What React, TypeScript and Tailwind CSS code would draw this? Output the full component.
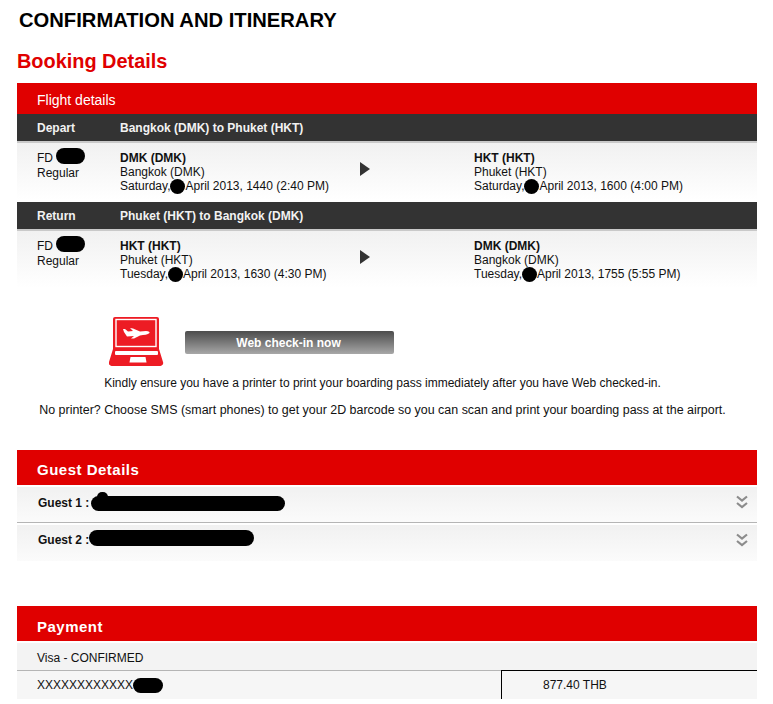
const font = "font-['Liberation_Sans',Arial,sans-serif]";

function Blob({ className }: { className: string }) {
    return <span className={`inline-block rounded-full bg-black blur-[0.6px] ${className}`} />;
}

function ChevronsIcon({ className }: { className?: string }) {
    return (
        <svg className={className} width="12" height="14" viewBox="0 0 12 14" fill="none" stroke="#8c8c8c" strokeWidth="2.2">
            <path d="M1 1.5 6 5.5 11 1.5" />
            <path d="M1 8 6 12 11 8" />
        </svg>
    );
}

function LaptopIcon() {
    return (
        <svg width="56" height="50" viewBox="0 0 56 50">
            <path d="M6 1h42a2 2 0 0 1 2 2v31H4V3a2 2 0 0 1 2-2z" fill="#ed1c24" />
            <rect x="7" y="3.5" width="40" height="27" fill="none" stroke="#fff" strokeWidth="1.4" />
            <path d="M4 33h46l4 13a3 3 0 0 1-3 4H3a3 3 0 0 1-3-4z" fill="#ed1c24" />
            <rect x="6" y="35" width="43" height="4" rx="1" fill="#fff" />
            <path d="M21.5 41h15l1 5.5h-17z" fill="#fff" />
            <path d="M15 16L14 13h2l3 2.5 5-.5-3-3 3 .5 7 3 6-.5c3 0 4 1.500 3.500 2-1.500 1.500-5.500 2-9.500 2.500l-6 3h-3l3-2.500-7 .5z" fill="#fff" />
        </svg>
    );
}

function FlightStop({ code, city, day, time }: { code: string; city: string; day: string; time: string }) {
    return (
        <div className="mt-[1px] flex flex-col leading-[14px]">
            <span className="font-bold">{code}</span>
            <span>{city}</span>
            <span className="flex h-[14px] items-center">
                {day}
                <Blob className="h-[15px] w-[15px] shrink-0" />
                {time}
            </span>
        </div>
    );
}

function FlightRow({ label, route, from, to }: {
    label: string;
    route: string;
    from: { code: string; city: string; day: string; time: string };
    to: { code: string; city: string; day: string; time: string };
}) {
    return (
        <div>
            <div className="flex h-[27px] items-center bg-[#333333] pl-5 text-xs font-bold text-[#f2f2f2]">
                <span className="w-[83px]">{label}</span>
                <span>{route}</span>
            </div>
            <div className="flex h-[59px] border-t-2 border-[#c9c9c9] bg-gradient-to-b from-[#f1f1f1] to-white pt-[7px] pl-5 text-xs text-[#111]">
                <div className="-mt-[2px] flex w-[83px] flex-col leading-[14px]">
                    <span className="flex items-center">
                        FD&nbsp;
                        <Blob className="mb-[3px] h-[16px] w-[29px]" />
                    </span>
                    <span className="-mt-[1px]">Regular</span>
                </div>
                <div className="w-[240px]">
                    <FlightStop {...from} />
                </div>
                <div className="flex w-[114px] items-start pt-[12px]">
                    <span className="h-0 w-0 border-y-[7px] border-l-[10px] border-y-transparent border-l-[#333]" />
                </div>
                <FlightStop {...to} />
            </div>
        </div>
    );
}

export default function App() {
    return (
        <div className={`${font} h-[704px] w-[773px] overflow-hidden bg-white`}>
            <div className="ml-[17px] w-[740px] pt-[9px]">
                <h1 className="ml-[2px] text-[20.2px] leading-[23px] font-bold text-black">CONFIRMATION AND ITINERARY</h1>
                <h2 className="mt-[17px] text-[19.9px] leading-[24px] font-bold text-[#e00000]">Booking Details</h2>

                <div className="mt-[10px]">
                    <div className="flex h-[31px] items-center bg-[#e00000] pt-[2px] pl-5 text-sm text-white">Flight details</div>
                    <FlightRow
                        label="Depart"
                        route="Bangkok (DMK) to Phuket (HKT)"
                        from={{ code: "DMK (DMK)", city: "Bangkok (DMK)", day: "Saturday,", time: "April 2013, 1440 (2:40 PM)" }}
                        to={{ code: "HKT (HKT)", city: "Phuket (HKT)", day: "Saturday,", time: "April 2013, 1600 (4:00 PM)" }}
                    />
                    <div className="h-[2px]" />
                    <FlightRow
                        label="Return"
                        route="Phuket (HKT) to Bangkok (DMK)"
                        from={{ code: "HKT (HKT)", city: "Phuket (HKT)", day: "Tuesday,", time: "April 2013, 1630 (4:30 PM)" }}
                        to={{ code: "DMK (DMK)", city: "Bangkok (DMK)", day: "Tuesday,", time: "April 2013, 1755 (5:55 PM)" }}
                    />
                </div>

                <div className="mt-[28px] flex items-start pl-[92px]">
                    <LaptopIcon />
                    <button className="mt-[15px] ml-[20px] h-[23px] w-[209px] rounded-[2px] bg-gradient-to-b from-[#4d4d4d] to-[#a8a8a8] pr-[2px] text-xs font-bold text-white">
                        Web check-in now
                    </button>
                </div>
                <p className="mt-[10px] pr-[9px] text-center text-xs leading-[14px] text-[#111]">
                    Kindly ensure you have a printer to print your boarding pass immediately after you have Web checked-in.
                </p>
                <p className="mt-[13px] pr-[9px] text-center text-[12.45px] leading-[14px] text-[#111]">
                    No printer? Choose SMS (smart phones) to get your 2D barcode so you can scan and print your boarding pass at the airport.
                </p>

                <div className="mt-[33px]">
                    <div className="flex h-[35px] items-center bg-[#e00000] pt-[5px] pl-5 text-[15px] font-bold tracking-[0.5px] text-white">Guest Details</div>
                    <div className="mt-[2px] flex h-[36px] items-start justify-between border-b border-[#b5b5b5] bg-gradient-to-b from-[#f1f1f1] to-[#fbfbfb] pt-[8px] pr-[9px] pl-[21px]">
                        <span className="flex items-center text-xs font-bold text-[#111]">
                            Guest 1 :
                            <span className="relative ml-[2px] flex">
                                <Blob className="mt-[1px] h-[15px] w-[194px]" />
                                <Blob className="absolute top-[-3px] left-[6px] h-[10px] w-[11px]" />
                            </span>
                        </span>
                        <ChevronsIcon />
                    </div>
                    <div className="mt-[2px] flex h-[36px] items-start justify-between bg-gradient-to-b from-[#f1f1f1] to-[#fbfbfb] pt-[5px] pr-[9px] pl-[21px]">
                        <span className="flex items-center text-xs font-bold text-[#111]">
                            Guest 2 :
                            <Blob className="mb-[4px] h-[16px] w-[165px]" />
                        </span>
                        <ChevronsIcon className="mt-[3px]" />
                    </div>
                </div>

                <div className="mt-[45px]">
                    <div className="flex h-[35px] items-center bg-[#e00000] pt-[7px] pl-5 text-[15px] font-bold tracking-[0.5px] text-white">Payment</div>
                    <div className="mt-[2px] flex h-[28px] items-center border-b border-[#b5b5b5] bg-[#f3f3f3] pt-[2px] pl-5 text-xs text-[#111]">
                        Visa - CONFIRMED
                    </div>
                    <div className="flex h-[28px] bg-[#f6f6f6] text-xs text-[#111]">
                        <div className="flex w-[484px] items-center pl-5">
                            XXXXXXXXXXXX
                            <Blob className="h-[15px] w-[30px]" />
                        </div>
                        <div className="-mt-[1px] flex flex-1 items-center border-t border-l border-black pl-[41px]">877.40 THB</div>
                    </div>
                </div>
            </div>
        </div>
    );
}
